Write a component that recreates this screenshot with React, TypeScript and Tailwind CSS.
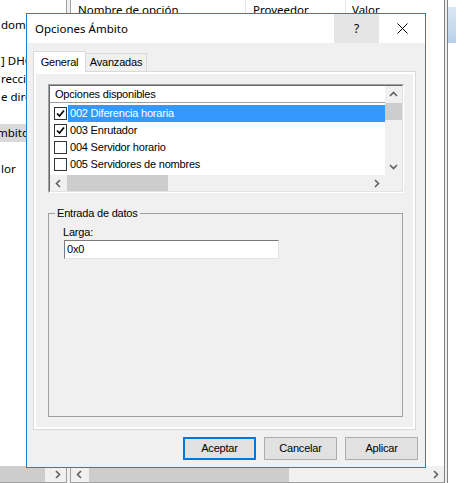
const seg = "font-['Noto_Sans',sans-serif] text-[11.5px]";
const dlg = "font-['Liberation_Sans',Arial,sans-serif] text-[11px] tracking-[-0.2px]";

function Chev({ d }: { d: "up" | "down" | "left" | "right" }) {
  const pts = {
    up: "1,6 4.5,2.5 8,6",
    down: "1,3 4.5,6.5 8,3",
    left: "6,1 2.5,4.5 6,8",
    right: "3,1 6.5,4.5 3,8",
  }[d];
  return (
    <svg width="9" height="9" viewBox="0 0 9 9">
      <polyline points={pts} fill="none" stroke="#606060" strokeWidth="1.6" />
    </svg>
  );
}

function Check({ on }: { on: boolean }) {
  return (
    <div className="w-[13px] h-[13px] border border-[#333333] bg-white flex items-center justify-center shrink-0">
      {on && (
        <svg width="9" height="9" viewBox="0 0 9 9">
          <path d="M1 4.5 L3.5 7 L8 1.5" fill="none" stroke="#000" strokeWidth="1.7" />
        </svg>
      )}
    </div>
  );
}

const options = [
  { label: "002 Diferencia horaria", on: true, sel: true },
  { label: "003 Enrutador", on: true, sel: false },
  { label: "004 Servidor horario", on: false, sel: false },
  { label: "005 Servidores de nombres", on: false, sel: false },
];

// only the part of the tree left of the dialog is visible
function TreePane() {
  const rows = ["dom", "", "] DHC", "recci", "e dire", "", "", "", "lor"];
  return (
    <div className={`w-[66px] h-full flex flex-col ${seg}`}>
      <div className="flex-1 overflow-hidden pt-[16px]">
        {rows.map((r, i) =>
          i === 6 ? (
            <div key={i} className="h-[18px] w-[26px] flex items-center bg-[#d9d9d9] overflow-hidden whitespace-nowrap">
              <span className="-ml-[3px]">mbito</span>
            </div>
          ) : (
            <div key={i} className="h-[18px] w-[26px] flex items-center pl-[1px] whitespace-nowrap overflow-hidden">
              {r}
            </div>
          )
        )}
      </div>
      <div className="h-[16px] flex bg-[#f0f0f0]">
        <div className="w-[45px] bg-[#cdcdcd]" />
        <div className="flex-1" />
        <div className="w-[17px] flex items-center justify-center">
          <Chev d="right" />
        </div>
      </div>
      <div className="h-[1px] bg-[#a0a0a0]" />
    </div>
  );
}

function ListPane() {
  return (
    <div className={`flex-1 h-full flex flex-col ${seg}`}>
      <div className="flex-1">
        <div className="h-[19px] flex whitespace-nowrap">
          <div className="w-[175px] pl-[7px] flex items-center border-r border-[#e5e5e5]">Nombre de opción</div>
          <div className="w-[100px] pl-[7px] flex items-center border-r border-[#e5e5e5]">Proveedor</div>
          <div className="flex-1 pl-[6px] flex items-center">Valor</div>
        </div>
      </div>
      <div className="h-[16px] flex bg-[#f0f0f0]">
        <div className="w-[17px] flex items-center justify-center">
          <Chev d="left" />
        </div>
        <div className="ml-[1px] w-[200px] bg-[#cdcdcd]" />
        <div className="flex-1" />
        <div className="w-[17px] flex items-center justify-center">
          <Chev d="right" />
        </div>
      </div>
      <div className="h-[1px] bg-[#a0a0a0]" />
    </div>
  );
}

function Dialog() {
  return (
    <div className="absolute left-[26px] top-[13px] w-[400px] h-[455px] border border-[#1883d7] bg-[#f0f0f0] flex flex-col">
      <div className="h-[29px] bg-white flex">
        <div className={`flex-1 pl-[8px] flex items-center ${seg}`}>Opciones Ámbito</div>
        <div className={`w-[45px] bg-[#e5e5e5] flex items-center justify-center ${seg} text-[12px]`}>?</div>
        <div className="w-[46px] flex items-center justify-center">
          <svg width="11" height="11" viewBox="0 0 11 11">
            <path d="M0.5 0.5 L10.5 10.5 M10.5 0.5 L0.5 10.5" stroke="#000" strokeWidth="1" />
          </svg>
        </div>
      </div>

      <div className={`flex-1 flex flex-col pl-[6px] pr-[9px] pt-[8px] pb-[7px] ${dlg}`}>
        <div className="h-[20px] flex items-end">
          <div className="relative z-10 -mb-px h-[21px] w-[53px] bg-white border border-b-0 border-[#d9d9d9] flex items-center justify-center">
            General
          </div>
          <div className="h-[18px] w-[61px] border border-b-0 border-l-0 border-[#d9d9d9] flex items-center justify-center">
            Avanzadas
          </div>
        </div>

        <div className="h-[359px] border border-[#d9d9d9] bg-white p-[2px]">
          <div className="h-full bg-[#f0f0f0] flex flex-col pl-[12px] pt-[10px]">
            <div className="w-[356px] h-[109px] border border-[#a0a0a0] border-r-white border-b-white">
              <div className="h-full border border-[#696969] border-r-[#e3e3e3] border-b-[#e3e3e3] grid grid-cols-[1fr_17px] grid-rows-[1fr_16px] bg-white">
                <div className="overflow-hidden">
                  <div className="h-[17px] pl-[5px] flex items-center border-b border-[#a0a0a0] whitespace-nowrap">
                    Opciones disponibles
                  </div>
                  <div className="pt-[2px]">
                    {options.map((o) => (
                      <div key={o.label} className="h-[17px] flex items-center pl-[4px]">
                        <Check on={o.on} />
                        <div
                          className={`ml-[1px] h-full flex-1 flex items-center pl-[2px] whitespace-nowrap ${
                            o.sel ? "bg-[#3399ff] text-white" : ""
                          }`}
                        >
                          {o.label}
                        </div>
                      </div>
                    ))}
                  </div>
                </div>
                <div className="flex flex-col bg-[#f0f0f0]">
                  <div className="h-[17px] flex items-center justify-center">
                    <Chev d="up" />
                  </div>
                  <div className="h-[17px] bg-[#cdcdcd]" />
                  <div className="flex-1" />
                  <div className="h-[17px] flex items-center justify-center">
                    <Chev d="down" />
                  </div>
                </div>
                <div className="flex bg-[#f0f0f0]">
                  <div className="w-[17px] flex items-center justify-center">
                    <Chev d="left" />
                  </div>
                  <div className="w-[101px] bg-[#cdcdcd]" />
                  <div className="flex-1" />
                  <div className="w-[17px] flex items-center justify-center">
                    <Chev d="right" />
                  </div>
                </div>
                <div className="bg-[#f0f0f0]" />
              </div>
            </div>

            <fieldset className="mt-[14px] w-[355px] h-[210px] border border-[#a0a0a0]">
              <legend className="ml-[6px] px-[2px] leading-[13px]">Entrada de datos</legend>
              <div className="pl-[14px]">
                <div className="mt-[6px] leading-[13px]">Larga:</div>
                <div className="mt-[1px] ml-[1px] w-[215px] h-[19px] bg-white border border-[#7a7a7a] border-r-[#e3e3e3] border-b-[#e3e3e3] flex items-center pl-[2px]">
                  0x0
                </div>
              </div>
            </fieldset>
          </div>
        </div>

        <div className="mt-[7px] -mr-[2px] flex justify-end gap-[8px]">
          <button className="w-[73px] h-[23px] bg-[#e1e1e1] border-2 border-[#0078d7]">Aceptar</button>
          <button className="w-[73px] h-[23px] bg-[#e1e1e1] border border-[#adadad]">Cancelar</button>
          <button className="w-[73px] h-[23px] bg-[#e1e1e1] border border-[#adadad]">Aplicar</button>
        </div>
      </div>
    </div>
  );
}

export default function App() {
  return (
    <div className="relative w-[456px] h-[483px] overflow-hidden bg-white text-black">
      <div className="flex h-full">
        <TreePane />
        <div className="w-[5px] border-x border-[#a0a0a0] bg-[#f0f0f0]" />
        <ListPane />
        <div className="w-[4px] border-x border-[#828282] bg-[#f0f0f0]" />
        <div className="w-[8px]">
          <div className="mt-[7px] h-[36px] bg-gradient-to-b from-[#dce7f5] to-[#b9d0ea]" />
        </div>
      </div>
      <Dialog />
    </div>
  );
}
